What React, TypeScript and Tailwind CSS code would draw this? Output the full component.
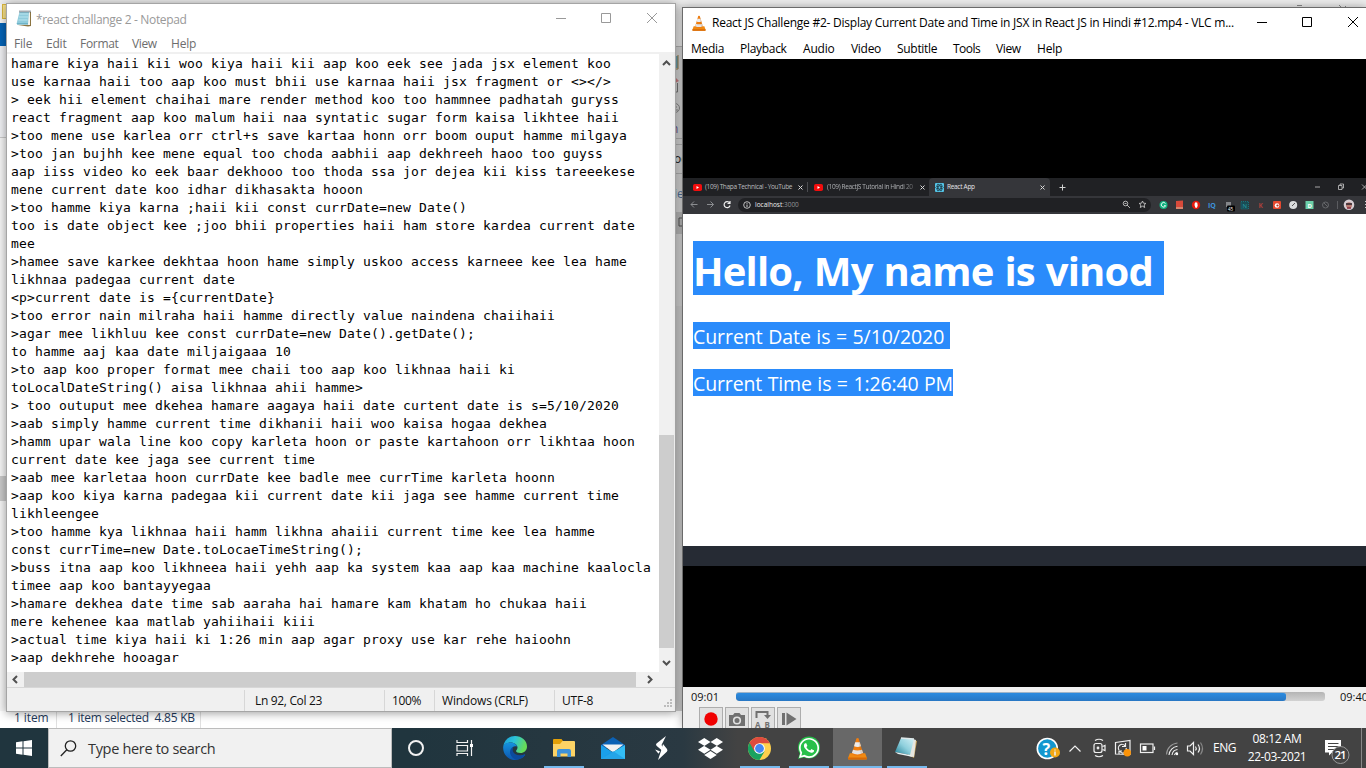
import React from "react";
import { FaDropbox, FaWhatsapp } from "react-icons/fa";

const NOTE_LINES = [
  "hamare kiya haii kii woo kiya haii kii aap koo eek see jada jsx element koo",
  "use karnaa haii too aap koo must bhii use karnaa haii jsx fragment or <></>",
  "> eek hii element chaihai mare render method koo too hammnee padhatah guryss",
  "react fragment aap koo malum haii naa syntatic sugar form kaisa likhtee haii",
  ">too mene use karlea orr ctrl+s save kartaa honn orr boom ouput hamme milgaya",
  ">too jan bujhh kee mene equal too choda aabhii aap dekhreeh haoo too guyss",
  "aap iiss video ko eek baar dekhooo too thoda ssa jor dejea kii kiss tareeekese",
  "mene current date koo idhar dikhasakta hooon",
  ">too hamme kiya karna ;haii kii const currDate=new Date()",
  "too is date object kee ;joo bhii properties haii ham store kardea current date",
  "mee",
  ">hamee save karkee dekhtaa hoon hame simply uskoo access karneee kee lea hame",
  "likhnaa padegaa current date",
  "<p>current date is ={currentDate}",
  ">too error nain milraha haii hamme directly value naindena chaiihaii",
  ">agar mee likhluu kee const currDate=new Date().getDate();",
  "to hamme aaj kaa date miljaigaaa 10",
  ">to aap koo proper format mee chaii too aap koo likhnaa haii ki",
  "toLocalDateString() aisa likhnaa ahii hamme>",
  "> too outuput mee dkehea hamare aagaya haii date curtent date is s=5/10/2020",
  ">aab simply hamme current time dikhanii haii woo kaisa hogaa dekhea",
  ">hamm upar wala line koo copy karleta hoon or paste kartahoon orr likhtaa hoon",
  "current date kee jaga see current time",
  ">aab mee karletaa hoon currDate kee badle mee currTime karleta hoonn",
  ">aap koo kiya karna padegaa kii current date kii jaga see hamme current time",
  "likhleengee",
  ">too hamme kya likhnaa haii hamm likhna ahaiii current time kee lea hamme",
  "const currTime=new Date.toLocaeTimeString();",
  ">buss itna aap koo likhneea haii yehh aap ka system kaa aap kaa machine kaalocla",
  "timee aap koo bantayyegaa",
  ">hamare dekhea date time sab aaraha hai hamare kam khatam ho chukaa haii",
  "mere kehenee kaa matlab yahiihaii kiii",
  ">actual time kiya haii ki 1:26 min aap agar proxy use kar rehe haioohn",
  ">aap dekhrehe hooagar",
];

function NotepadIcon({ big = false }: { big?: boolean }) {
  return big ? (
    <svg width="24" height="24" viewBox="0 0 24 24">
      <defs>
        <linearGradient id="npb" x1="0" y1="1" x2="1" y2="0">
          <stop offset="0" stopColor="#1f7f96" />
          <stop offset="0.5" stopColor="#8fd0dd" />
          <stop offset="1" stopColor="#d4f1f6" />
        </linearGradient>
      </defs>
      <path d="M19 4l4 1-3 17-6-3z" fill="#c9a35a" />
      <path d="M19 3l3 1-2 17-5-1z" fill="#e6e6e0" />
      <path d="M7 2l13 1-4 16L1 16z" fill="url(#npb)" />
      <path d="M1 16l15 3 3 2-15-3z" fill="#e9f2f4" />
      <path d="M7 2l13 1" stroke="#dfe9ea" strokeWidth="1.4" />
    </svg>
  ) : (
    <svg width="16" height="17" viewBox="0 0 16 17">
      <path d="M4 2l11 0v14l-3 .5-10-1.500z" fill="#8b7441" />
      <path d="M3 2h11v13H2z" fill="#f4f4ee" />
      <path d="M3.500 2H13l-1 12H.5z" fill="#8fcbdc" />
      <path d="M3.500 4h8.800M3 7h9M2.500 10h9" stroke="#b8e4ee" />
      <path d="M1 14l11 0" stroke="#4b9db5" />
      <path d="M3.500 1.500h11" stroke="#4a5560" strokeDasharray="1 1" strokeWidth="2" />
    </svg>
  );
}

function Cone({ size }: { size: number }) {
  return (
    <svg width={size} height={size} viewBox="0 0 24 24">
      <path d="M4 17h16l2 5.500q0 1-1 1H3q-1 0-1-1z" fill="#f08a12" />
      <path d="M2.200 21.500h19.600v1.200q0 .8-1 .8H3.200q-1 0-1-.8z" fill="#d86a06" />
      <path d="M10.800 1.500q1.200-1 2.400 0L18 18q-6 3.500-12 0z" fill="#f07e10" />
      <path d="M9.600 5.500h4.800l1.200 4.200q-3.600 1.500-7.200 0z" fill="#ececec" />
      <path d="M7.300 13.200q4.700 1.700 9.400 0l1.100 3.600q-5.800 2.700-11.600 0z" fill="#e4e4e4" />
      <path d="M13 2l2 6 2.500 9.500-2 .8L13.500 8z" fill="#8a4a10" opacity=".15" />
    </svg>
  );
}

function WindowButtons({ color }: { color: string }) {
  return (
    <svg width="106" height="12" viewBox="0 0 106 12" fill="none" stroke={color} shapeRendering="auto">
      <path d="M1 6.500h10" />
      <path d="M46.500 1.500h9v9h-9z" />
      <path d="M92 1l10 10M102 1L92 11" />
    </svg>
  );
}

function Notepad() {
  return (
    <section className="absolute left-[6px] top-[3px] flex h-[709px] w-[670px] flex-col border border-[#a5a5a5] bg-white shadow-[0_1px_9px_rgba(0,0,0,0.4)]">
      <header className="flex h-[30px] shrink-0 items-center text-[12px] text-[#999]">
        <span className="ml-[9px] mt-[-2px]"><NotepadIcon /></span>
        <span className="ml-1 mt-[1px] tracking-[-0.33px]">*react challange 2 - Notepad</span>
        <span className="ml-auto mr-[14px] mt-[-2px]"><WindowButtons color="#999" /></span>
      </header>
      <nav className="flex h-[18px] shrink-0 items-center pl-[7px] pt-[2px] text-[12px] leading-[18px] text-[#6d6d6d]">
        <span className="w-[32px] tracking-[-0.2px]">File</span>
        <span className="w-[34px] tracking-[-0.2px]">Edit</span>
        <span className="w-[52px] tracking-[-0.3px]">Format</span>
        <span className="w-[39px] tracking-[-0.4px]">View</span>
        <span className="tracking-[-0.2px]">Help</span>
      </nav>
      <div className="h-[2px] shrink-0 bg-[#f0f0f0]" />
      <div className="flex h-[618px] shrink-0">
        <pre className="w-[652px] overflow-hidden pl-[4px] pt-[1px] font-['DejaVu_Sans_Mono',monospace] text-[13px] leading-[18px] tracking-[0.174px] text-black">
          {NOTE_LINES.join("\n")}
        </pre>
        <div className="flex w-[16px] flex-col items-center bg-[#f0f0f0]">
          <svg className="mt-[5px] -ml-[2px]" width="9" height="8" viewBox="0 0 9 8" fill="none" stroke="#505050" strokeWidth="2"><path d="M1 6l3.500-3.500L8 6" /></svg>
          <div className="mt-[368px] h-[213px] w-[15px] self-start bg-[#cdcdcd]" />
          <svg className="mt-[11px] -ml-[2px]" width="9" height="8" viewBox="0 0 9 8" fill="none" stroke="#505050" strokeWidth="2"><path d="M1 2l3.500 3.500L8 2" /></svg>
        </div>
      </div>
      <div className="flex h-[15px] shrink-0 items-center bg-[#f0f0f0]">
        <span className="flex w-[17px] justify-center pr-[2px]">
          <svg width="8" height="9" viewBox="0 0 8 9" fill="none" stroke="#505050" strokeWidth="2"><path d="M6 1L2.500 4.500 6 8" /></svg>
        </span>
        <div className="h-[15px] w-[612px] bg-[#cdcdcd]" />
        <svg className="ml-[10px]" width="8" height="9" viewBox="0 0 8 9" fill="none" stroke="#505050" strokeWidth="2"><path d="M2 1l3.500 3.500L2 8" /></svg>
      </div>
      <footer className="flex min-h-0 flex-1 items-stretch bg-[#f0f0f0] pt-[3px] text-[12px] leading-[22px] text-[#111] shadow-[inset_0_2px_0_-1px_#d7d7d7]">
        <span className="w-[237px]" />
        <span className="w-[140px] border-l border-[#d7d7d7] pl-[10px] tracking-[-0.33px]">Ln 92, Col 23</span>
        <span className="w-[50px] border-l border-[#d7d7d7] pl-[7px] tracking-[-0.4px]">100%</span>
        <span className="w-[120px] border-l border-[#d7d7d7] pl-[7px] tracking-[-0.2px]">Windows (CRLF)</span>
        <span className="border-l border-[#d7d7d7] pl-[7px] tracking-[-0.2px]">UTF-8</span>
        <svg className="ml-auto mr-[2px] mt-[9px]" width="9" height="9" fill="#bdbdbd">
          <path d="M6 0h2v2h-2zM3 3h2v2h-2zM6 3h2v2h-2zM0 6h2v2h-2zM3 6h2v2h-2zM6 6h2v2h-2z" />
        </svg>
      </footer>
    </section>
  );
}

function YouTube() {
  return (
    <svg width="9" height="7" viewBox="0 0 9 7"><rect width="9" height="7" rx="1.800" fill="#f20d0d" /><path d="M3.500 2l2.500 1.500L3.500 5z" fill="#fff" /></svg>
  );
}

function TabClose() {
  return <svg className="shrink-0" width="5" height="5" viewBox="0 0 5 5" stroke="#d8d8d8"><path d="M.5.5l4 4M4.500.5l-4 4" /></svg>;
}

function BrowserVideo() {
  return (
    <div className="flex h-[388px] flex-col bg-white">
      <div className="flex h-[18px] shrink-0 items-center bg-[#202124] text-[6.500px] text-[#b9bbbe]">
        <div className="flex w-[125px] items-center border-r border-[#4b4c50] pl-[10px] pr-[4px]">
          <YouTube /><span className="ml-[3px] flex-1 whitespace-nowrap font-medium tracking-[-0.34px]">(109) Thapa Technical - YouTube</span><TabClose />
        </div>
        <div className="flex w-[121px] items-center pl-[6px] pr-[4px]">
          <YouTube /><span className="ml-[4px] flex-1 whitespace-nowrap bg-linear-to-r from-[#b9bbbe] from-80% to-[#3a3b3e] bg-clip-text font-medium tracking-[-0.36px] text-transparent">(109) ReactJS Tutorial in Hindi 20</span><TabClose />
        </div>
        <div className="flex h-full w-[121px] items-center rounded-t-[4px] bg-[#35363a] pl-[6px] pr-[5px] text-[#e4e5e7]">
          <svg width="9" height="9" viewBox="0 0 9 9" fill="none" stroke="#1b3440" strokeWidth=".7">
            <rect width="9" height="9" rx="1" fill="#54c4e6" stroke="none" />
            <ellipse cx="4.500" cy="4.500" rx="3.800" ry="1.500" /><ellipse cx="4.500" cy="4.500" rx="3.800" ry="1.500" transform="rotate(60 4.500 4.500)" /><ellipse cx="4.500" cy="4.500" rx="3.800" ry="1.500" transform="rotate(120 4.500 4.500)" />
          </svg>
          <span className="ml-[3px] flex-1 font-medium tracking-[-0.3px]">React App</span><TabClose />
        </div>
        <svg className="ml-[9px]" width="7" height="7" stroke="#d0d0d0"><path d="M.5 3.500h6M3.500.5v6" /></svg>
        <svg className="ml-auto" width="52" height="8" viewBox="0 0 52 8" fill="none" stroke="#c8c8c8" strokeWidth=".8">
          <path d="M1 4h5M24.500 2.500h3.500v4h-3.500zM26 2.500V1h3.500v4H28M48 1.500l5 5M53 1.500l-5 5" />
        </svg>
      </div>
      <div className="flex h-[18px] shrink-0 items-center bg-[#35363a] pb-[1px]">
        <svg width="55" height="9" viewBox="0 0 55 9" fill="none" stroke="#8b8d90">
          <path d="M14.500 4.500H8M11 1.500l-3 3 3 3M24 4.500h6.500M27.500 1.500l3 3-3 3" />
          <path d="M46.600 3A3 3 0 1 0 47 5.500M47 1v2.500h-2.500" stroke="#eee" strokeWidth="1.200" />
        </svg>
        <div className="flex h-[14px] w-[413px] items-center rounded-[7px] bg-[#202124] pl-[5px] text-[6.500px] text-[#eee]">
          <svg width="8" height="8" viewBox="0 0 8 8" fill="none" stroke="#d0d0d0"><circle cx="4" cy="4" r="3.300" strokeWidth=".9" /><path d="M4 3.500V6M4 2v.8" /></svg>
          <span className="ml-[4px] font-medium">localhost<span className="text-[#929497]">:3000</span></span>
          <svg className="ml-auto mr-[4px]" width="26" height="9" viewBox="0 0 26 9" fill="none" stroke="#c4c4c4" strokeWidth=".9">
            <circle cx="4.500" cy="3.500" r="2.300" /><path d="M6 5l3 3M3.500 3.500h2" />
            <path d="M21.500 1l1 2.200 2.400.2-1.800 1.600.6 2.500-2.200-1.300-2.200 1.300.6-2.500-1.800-1.600 2.400-.2z" />
          </svg>
        </div>
        <svg width="215" height="18" viewBox="1151 0 215 18">
          <circle cx="1163.500" cy="9" r="4" fill="#10b37f" /><path d="M1165.500 7.500a2.300 2.300 0 1 0 .2 2.200h-1.700" stroke="#fff" strokeWidth=".9" fill="none" />
          <path d="M1176 5l7-.5v8.500h-7z" fill="#d84a3a" /><path d="M1176 12h7" stroke="#d7bfa0" />
          <circle cx="1196" cy="9" r="4.200" fill="#e4190d" /><path d="M1194.500 9l.3-2 .8-.8.8.4.8 0 .5 3-.7 2.200h-1.600z" fill="#fff" />
          <text x="1208" y="11.500" fontSize="7" fontWeight="700" fill="#3e91d9">IQ</text>
          <path d="M1226 6h5v5h-5z" fill="#84868a" /><rect x="1227" y="9.500" width="8" height="6" rx="1" fill="#000" /><text x="1228" y="14.500" fontSize="4.500" fill="#fff">45</text>
          <rect x="1241" y="5.500" width="7.500" height="7.500" fill="#194b54" stroke="#17747d" strokeDasharray="1 1" /><text x="1242.500" y="11.500" fontSize="6" fill="#299fa8">N</text>
          <text x="1258.500" y="11.500" fontSize="6.500" fontWeight="700" fill="#a8413c">K</text>
          <rect x="1273" y="5" width="8" height="8" rx="1" fill="#e4492f" /><circle cx="1277" cy="9.500" r="2.300" fill="#fff" /><circle cx="1277.500" cy="9.500" r="1.100" fill="#b73524" />
          <circle cx="1293.200" cy="9" r="4" fill="#dadcdd" /><path d="M1292 10l3-3" stroke="#555" />
          <rect x="1305.500" y="5" width="8" height="8" fill="#6bcfa8" /><text x="1307.500" y="11.500" fontSize="6" fontWeight="700" fill="#fff">D</text>
          <circle cx="1325.500" cy="9" r="3" fill="none" stroke="#65676a" /><path d="M1324 7l4 4" stroke="#65676a" />
          <path d="M1337.500 5v8" stroke="#5b5c60" />
          <circle cx="1349" cy="8.800" r="5.300" fill="#d6cdd2" /><circle cx="1349" cy="9.200" r="3" fill="#b87b70" /><path d="M1346 8h6" stroke="#28202a" strokeWidth="1.500" /><path d="M1347 12h4" stroke="#882c3e" strokeWidth="1.500" />
          <path d="M1365 5.500h1M1365 8.500h1M1365 11.500h1" stroke="#ccc" />
        </svg>
      </div>
      <div className="flex h-[332px] shrink-0 flex-col items-start pl-[10px] pt-[27px] text-white">
        <h1 className="flex h-[54px] w-[471px] items-center whitespace-nowrap bg-[#2a8bfb] pt-[5px] text-[40px] font-bold leading-[50px] tracking-[-0.82px] [word-spacing:1.3px]">Hello, My name is vinod</h1>
        <p className="mt-[27px] h-[27px] w-[257px] whitespace-nowrap bg-[#2a8bfb] text-[19.500px] leading-[29px] tracking-[-0.06px] [word-spacing:0.5px]">Current Date is = 5/10/2020</p>
        <p className="mt-[20px] h-[27px] w-[260px] whitespace-nowrap bg-[#2a8bfb] text-[19.500px] leading-[29px] tracking-[-0.13px] [word-spacing:0.6px]">Current Time is = 1:26:40 PM</p>
      </div>
      <div className="h-[20px] shrink-0 bg-[#262b34]" />
    </div>
  );
}

function Vlc() {
  const cell = "flex h-[24px] w-[24px] items-center justify-center border border-[#adadad] bg-[#e1e1e1]";
  return (
    <section className="absolute left-[682px] top-[7px] flex h-[721px] w-[684px] flex-col overflow-hidden border-l border-t border-[#6b6b6b] bg-white shadow-[0_0_9px_rgba(0,0,0,0.3)]">
      <header className="flex h-[30px] shrink-0 items-center text-[12px] text-black">
        <span className="ml-[8px] mt-[-1px]"><Cone size={16} /></span>
        <span className="ml-[5px] whitespace-nowrap tracking-[-0.24px]">React JS Challenge #2- Display Current Date and Time in JSX in React JS in Hindi #12.mp4 - VLC m...</span>
        <span className="ml-auto mr-[4px] mt-[-2px]"><WindowButtons color="#000" /></span>
      </header>
      <nav className="flex h-[21px] shrink-0 items-center pl-[8px] text-[12px] text-black">
        <span className="w-[49px] tracking-[-0.3px]">Media</span>
        <span className="w-[63px] tracking-[-0.3px]">Playback</span>
        <span className="w-[48px] tracking-[-0.2px]">Audio</span>
        <span className="w-[46px] tracking-[-0.3px]">Video</span>
        <span className="w-[56px] tracking-[-0.3px]">Subtitle</span>
        <span className="w-[43px] tracking-[-0.5px]">Tools</span>
        <span className="w-[41px] tracking-[-0.4px]">View</span>
        <span className="tracking-[-0.2px]">Help</span>
      </nav>
      <div className="flex h-[628px] shrink-0 flex-col bg-black pt-[119px]"><BrowserVideo /></div>
      <div className="flex min-h-0 flex-1 flex-col bg-[#f0f0f0]">
        <div className="flex h-[20px] shrink-0 items-center whitespace-nowrap text-[11px] text-[#111]">
          <span className="w-[53px] shrink-0 pl-[8px]">09:01</span>
          <div className="mt-[-2px] h-[9px] w-[589px] shrink-0 overflow-hidden rounded-[3px] bg-linear-to-b from-[#b4b4b4] to-[#d2d2d2]">
            <div className="h-[9px] w-[550px] rounded-[3px] border-t border-[#9fb4c8] bg-linear-to-b from-[#2b8be0] to-[#2877c4]" />
          </div>
          <span className="ml-[15px] shrink-0">09:40</span>
        </div>
        <div className="flex shrink-0 gap-[2px] pl-[16px]">
          <div className={cell}><svg width="14" height="14"><circle cx="7" cy="7" r="6.700" fill="#f00000" /></svg></div>
          <div className={cell}><svg width="18" height="15" viewBox="0 0 18 15"><path d="M1 3h4l1.500-2h5L13 3h4v11H1z" fill="#707070" /><circle cx="9" cy="8.500" r="3.300" fill="#707070" stroke="#e1e1e1" strokeWidth="1.600" /></svg></div>
          <div className={cell}>
            <svg width="18" height="18" viewBox="0 0 18 18" fill="none" stroke="#707070" strokeWidth="2">
              <path d="M2.500 8V2h11v4" /><path d="M10 5h7l-3.500 4z" fill="#707070" stroke="none" />
              <text x="1" y="17.500" fontSize="8" fontWeight="700" fill="#707070" stroke="none">A</text><text x="10.500" y="17.500" fontSize="8" fontWeight="700" fill="#707070" stroke="none">B</text>
            </svg>
          </div>
          <div className={cell}><svg width="16" height="14" fill="#707070"><path d="M1 1h3v12H1zM5.500 0.500L15.500 7l-10 6.500z" /></svg></div>
        </div>
      </div>
    </section>
  );
}

function Desktop() {
  return (
    <div className="absolute inset-0 flex flex-col bg-white text-[12px]">
      <div className="h-[4px] shrink-0 bg-[#ececec]" />
      <div className="flex flex-1">
        <div className="flex w-[10px] flex-col bg-[#f5f5f5]">
          <div className="ml-[2px] h-[15px] border border-[#dcb83f] bg-[#fbe48c]" />
          <div className="mt-[4px] h-[23px] bg-[#0463b6]" />
          <div className="h-[92px] border-b border-[#c9c9c9] bg-[#eff0f3]" />
          <div className="mt-[338px] h-[25px] bg-[#c9c9c9]" />
        </div>
        <div className="ml-auto flex w-[691px] flex-col">
          <div className="flex h-[42px] justify-end bg-[#e9e9e9] pr-[20px]">
            <svg width="52" height="6" fill="none" stroke="#888"><path d="M3 1.500h5M1.500 3.500v3M45 1l5 5M53 1l-5 5" /></svg>
          </div>
          <svg width="10" height="260" viewBox="0 0 10 260">
            <rect width="10" height="260" fill="#d7d7d7" />
            <path d="M0 .5h10M0 92.500h10M0 98.500h10M0 127.500h10" stroke="#b2b2b2" />
            <path d="M0 10h3v12H0z" fill="#6fa3b3" /><path d="M3 9v14H0" stroke="#9a7d47" fill="none" />
            <path d="M0 31l4 4-4 2z" fill="#c77c80" /><path d="M2.500 37v9H0" stroke="#777" fill="none" />
            <circle cx="0" cy="62" r="4.500" fill="none" stroke="#888" /><path d="M-2 61h4M-1 64h4" stroke="#888" />
            <text x="-4" y="87" fontSize="12" fill="#67518d">n</text>
            <text x="-1" y="117" fontSize="12" fill="#222">oc</text>
            <text x="-1" y="152" fontSize="12" fill="#50709a">ie</text>
            <path d="M0 166h10v22H0z" fill="#bababa" /><path d="M10 172H4v8h6" stroke="#555" fill="none" />
          </svg>
          <div className="w-[10px] flex-1 bg-[#cfcfcf]" />
        </div>
      </div>
      <div className="flex h-[57px] shrink-0 items-start pl-[14px] leading-[14px] text-[#1e395b]">
        <span className="h-[12px] w-[43px] border-r border-[#e0e0e0] pb-[24px] tracking-[-0.1px]">1 item</span>
        <span className="ml-[11px] h-[12px] w-[133px] whitespace-pre border-r border-[#e0e0e0] pb-[24px] tracking-[-0.25px]">1 item selected  4.85 KB</span>
      </div>
    </div>
  );
}

function Slot({ children, state = "idle" }: { children: React.ReactNode; state?: "idle" | "open" | "active" }) {
  return (
    <div className={state === "active" ? "flex h-full w-[49px] flex-col items-center bg-[#686868]" : "flex h-full w-[49px] flex-col items-center"}>
      <div className="flex flex-1 items-center pt-[2px]">{children}</div>
      <div className={state === "idle" ? "h-[2px]" : state === "open" ? "h-[2px] w-[40px] bg-[#76b9ed]" : "h-[2px] w-full bg-[#76b9ed]"} />
    </div>
  );
}

function Taskbar() {
  return (
    <footer className="absolute bottom-0 left-0 flex h-[40px] w-full items-center bg-linear-to-r from-[#20353e] from-30% via-[#2a3942] via-50% to-[#434343] to-54% text-white">
      <div className="flex w-[48px] justify-center"><svg width="16" height="16" viewBox="0 0 16 16" fill="#fff"><path d="M0 2.200L6.500 1.300v6.200H0zM7.500 1.200L16 0v7.500H7.500zM0 8.500h6.500v6.200L0 13.800zM7.500 8.500H16V16l-8.500-1.200z" /></svg></div>
      <div className="flex h-full w-[344px] items-center border border-[#bcbcbc] bg-[#f1f1f1] pl-[11px] text-[14.500px] text-[#333]">
        <svg width="17" height="17" viewBox="0 0 17 17" fill="none" stroke="#222" strokeWidth="1.300"><circle cx="10.500" cy="6" r="5.200" /><path d="M6.800 9.700L.8 16" /></svg>
        <span className="ml-[11px] mt-[1px] tracking-[-0.32px]">Type here to search</span>
      </div>
      <div className="flex w-[48px] justify-center"><svg width="18" height="18"><circle cx="9" cy="9" r="7" fill="none" stroke="#f2f2f2" strokeWidth="2" /></svg></div>
      <div className="flex w-[50px] justify-center pr-[1px]">
        <svg width="18" height="16" viewBox="0 0 18 16" fill="none" stroke="#f2f2f2" strokeWidth="1.200"><path d="M1 0v2.500h10.500V0M1 5.500h10.500v5.500H1zM1 16v-2.500h10.500V16M15.500 0v16" /><path d="M14 4h3v3h-3z" fill="#fff" stroke="none" /></svg>
      </div>
      <Slot>
        <svg width="24" height="24" viewBox="0 0 24 24">
          <defs>
            <linearGradient id="edgeTop" x1="0" y1="0" x2="1" y2=".3"><stop offset="0" stopColor="#199bd8" /><stop offset=".5" stopColor="#2cc3d9" /><stop offset="1" stopColor="#66dc58" /></linearGradient>
            <linearGradient id="edgeLeft" x1="0" y1="0" x2="0" y2="1"><stop offset="0" stopColor="#1593de" /><stop offset="1" stopColor="#0d55ae" /></linearGradient>
          </defs>
          <path d="M.2 10.500C1 4.500 6 0 12 0c6.500 0 12 4.500 12 10.500 0 4-3 6.500-6.500 6.500-2.500 0-4.500-.8-4.500-2 0-.8 1.500-1.300 1.500-3.500 0-2.500-3-5-7-5C4 6.500 1.200 8.500.2 10.500z" fill="url(#edgeTop)" />
          <path d="M.2 10.500C1.500 7.500 4.500 6 7.500 6.500c3.500 0 6 2 6.700 4C9 9 7.500 14 10 17c2 2.500 6 3.800 11.500 1.500.7-.2.8.3.4.8C20 22 16 24 12 24 5 24-.5 18 .2 10.500z" fill="url(#edgeLeft)" />
          <path d="M10.500 10.800C8.500 11.500 7 13.500 7 16c0 3.800 3.200 7.500 8 7.600 3-.6 5.500-2.200 7-4.500.3-.5 0-.8-.5-.6C16 20.800 11 18.500 10 15.500c-.6-1.800-.2-3.500.5-4.700z" fill="#0b4a9e" />
        </svg>
      </Slot>
      <Slot state="open">
        <svg width="22" height="19" viewBox="0 0 22 19"><path d="M0 1q0-1 1-1h7.500l1.500 2h11v4H0z" fill="#e3a008" /><path d="M9.500 2h11.500q1 0 1 1v14.500H0V5h7z" fill="#fdd365" /><path d="M4 18v-6q0-2 2-2h10q2 0 2 2v6h-3.500v-3.500h-7V18z" fill="#3d92da" /></svg>
      </Slot>
      <Slot>
        <svg width="24" height="22" viewBox="0 0 24 22"><path d="M0 8L12 0l12 8v3H0z" fill="#0c62b5" /><path d="M1.500 7.500h21L12 15.500z" fill="#f3f3f3" /><path d="M0 8l12 7.500V22H0z" fill="#1aa0ea" /><path d="M24 8L0 22h24z" fill="#33bdf5" /><path d="M0 22l12-8 12 8z" fill="#1b93df" opacity=".6" /></svg>
      </Slot>
      <Slot>
        <svg width="13" height="24" viewBox="0 0 13 24" fill="#fff"><path d="M11 0L1.500 7.500q-1 1 0 2.300L7 14.500l1.500-2.200L6.500 9z" /><path d="M8 8l4 5q1 1.500-.2 2.700L3 24l3-9z" /><path d="M0 13.500l5 1.700-1.500 2.500z" /></svg>
      </Slot>
      <Slot><FaDropbox size={25} /></Slot>
      <Slot state="open">
        <svg width="23" height="23" viewBox="0 0 24 24">
          <circle cx="12" cy="12" r="12" fill="#ffd04c" />
          <path d="M12 12L1.600 6A12 12 0 0 0 12 24l5.200-9z" fill="#1aa260" />
          <path d="M12 6.500h10.700A12 12 0 0 0 1.600 6l5.200 9z" fill="#de4b3e" />
          <circle cx="12" cy="12" r="5.600" fill="#fff" /><circle cx="12" cy="12" r="4.600" fill="#4587f3" />
        </svg>
      </Slot>
      <Slot state="open">
        <svg width="24" height="24" viewBox="0 0 24 24">
          <circle cx="12" cy="11.500" r="11" fill="#27c04a" /><path d="M1 23l2-6 5 4z" fill="#27c04a" />
          <g transform="translate(0.500 0.500)"><FaWhatsapp size={23} color="#fff" /></g>
        </svg>
      </Slot>
      <Slot state="active"><Cone size={23} /></Slot>
      <Slot state="open"><span className="-ml-[2px]"><NotepadIcon big /></span></Slot>
      <div className="ml-auto flex h-full items-center">
        <svg width="176" height="40" viewBox="1036 0 176 40" fill="none" stroke="#f0f0f0" strokeWidth="1.200">
          <circle cx="1047.300" cy="20.500" r="10" fill="#1397cf" stroke="#fff" strokeWidth="1.600" />
          <text x="1042.500" y="26.500" fontSize="16" fontWeight="700" fill="#fff" stroke="none">?</text>
          <circle cx="1055" cy="24.500" r="5" fill="#f3a712" stroke="none" /><path d="M1055 23.500v4M1055 21.500v1" strokeWidth="1.500" />
          <path d="M1069.500 23.500l5.500-5.500 5.500 5.500" />
          <rect x="1094" y="15.500" width="8" height="9" rx="2" /><path d="M1102.500 18.500l2.500-1v5l-2.500-1M1095 12.500q4-2.500 8 0M1095 27.500q4 2.500 8 0" /><circle cx="1098" cy="20" r=".8" />
          <path d="M1115.500 14.500l14.500-2v14l-14.500-.5z" /><path d="M1119 22a3.500 3.500 0 0 1 6-4M1125.500 15v3.500h-3.500M1126 20a3.500 3.500 0 0 1-6 3.500M1119 26v-3h3" />
          <circle cx="1127.300" cy="24.800" r="3.700" fill="#fb9309" stroke="none" />
          <rect x="1140.500" y="16" width="12.500" height="8.500" /><path d="M1154.500 18.500v3.500" /><path d="M1142.500 18h4v4.500h-4z" fill="#fff" stroke="none" />
          <g strokeWidth="1.100"><path d="M1166.500 26.500a12 12 0 0 1 11-11.500" stroke="#999" /><path d="M1169 27a9.500 9.500 0 0 1 8.500-8.800M1172 27a6.500 6.500 0 0 1 5.500-5.500M1174.500 27a4 4 0 0 1 3-2.800" /></g><circle cx="1177" cy="26" r="1.200" fill="#fff" stroke="none" />
          <path d="M1187.500 18h2.500l3.500-3.500v12l-3.500-3.500h-2.500zM1195.500 18.500q1.500 2 0 4M1198 16.500q3 4 0 8" /><path d="M1200.500 14.500q4 6 0 12" stroke="#888" />
        </svg>
        <span className="ml-[1px] w-[24px] text-[12px] tracking-[-0.5px]">ENG</span>
        <div className="w-[80px] text-center text-[12px] leading-[18px] tracking-[-0.4px]">08:12 AM<br />22-03-2021</div>
        <svg className="ml-[6px]" width="43" height="40" viewBox="1323 0 43 40">
          <path d="M1325 12h16v12.500h-9l-3 3v-3h-4z" fill="#fff" /><path d="M1328 15.500h10.500M1328 18.500h10.500M1328 21.500h7" stroke="#444" />
          <circle cx="1340.500" cy="27" r="8.500" fill="#444" stroke="#999" />
          <text x="1334.500" y="31.300" fontSize="11.500" fontWeight="600" textLength="12" fill="#fff">21</text>
          <path d="M1361.500 0v40" stroke="#888" />
        </svg>
      </div>
    </footer>
  );
}

export default function App() {
  return (
    <main className="relative h-[768px] w-[1366px] overflow-hidden bg-white font-['Open_Sans','Noto_Sans',sans-serif]">
      <Desktop />
      <Notepad />
      <Vlc />
      <Taskbar />
    </main>
  );
}
